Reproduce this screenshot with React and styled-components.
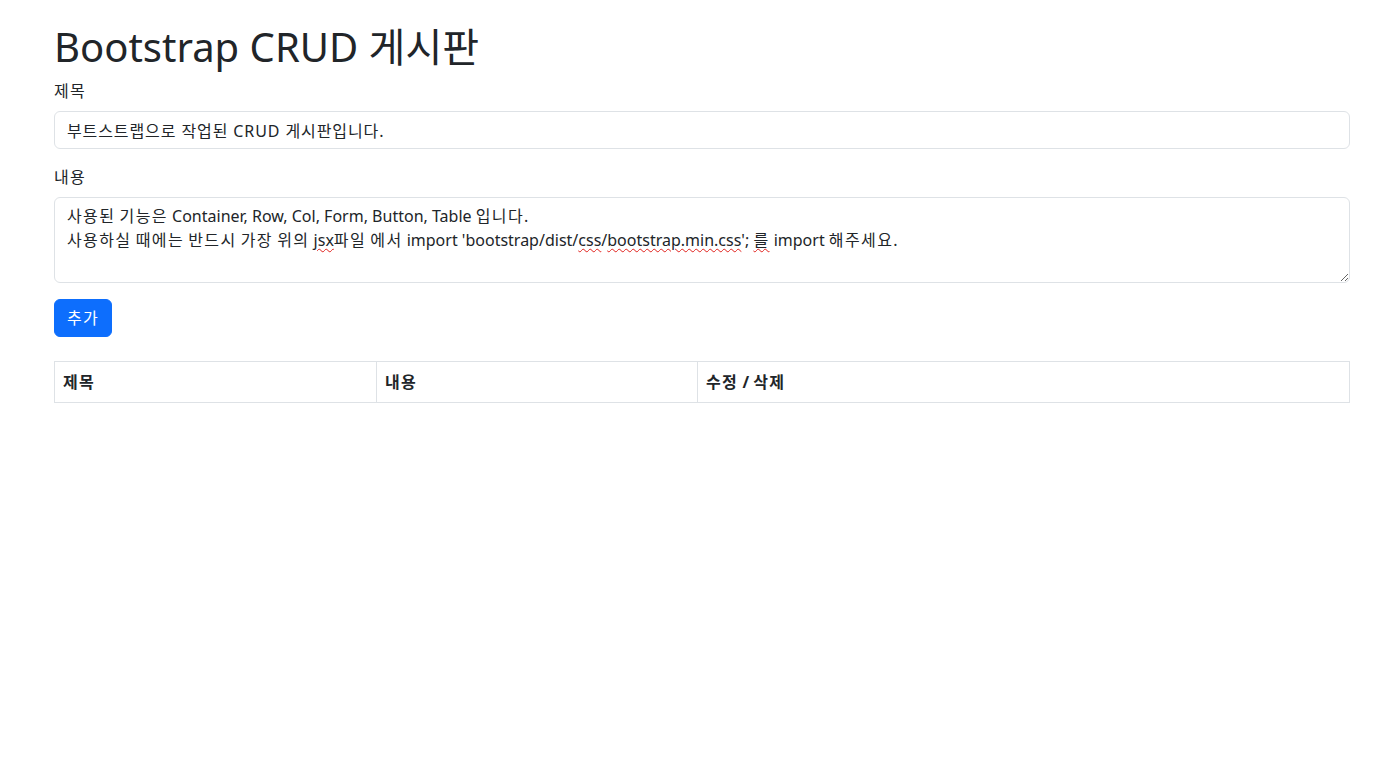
import React from 'react';
import styled, { createGlobalStyle } from 'styled-components';

const GlobalStyle = createGlobalStyle`
  html, body {
    margin: 0;
    padding: 0;
    background: #fff;
  }
  body {
    font-family: "Noto Sans", "Noto Sans CJK KR", sans-serif;
    font-size: 16px;
    line-height: 1.5;
    color: #212529;
  }
  * {
    box-sizing: border-box;
  }
`;

// hangul at 16px renders a bit wider in the original font
const HANGUL = /([\uAC00-\uD7A3]+)/;

const Wide = styled.span`
  letter-spacing: 1.4px;
`;

const Ko = ({ children }) =>
  String(children)
    .split(HANGUL)
    .map((part, i) => (HANGUL.test(part) ? <Wide key={i}>{part}</Wide> : part));

const Container = styled.div`
  padding: 23px 34px 0 54px;
`;

const Title = styled.h1`
  margin: 0 0 8px;
  font-size: 40px;
  font-weight: 400;
  line-height: 1.2;
`;

const Field = styled.div`
  margin-bottom: 16px;
`;

const Label = styled.label`
  display: block;
  margin-bottom: 8px;
`;

const Input = styled.input`
  display: block;
  width: 100%;
  height: 38px;
  padding: 6px 12px;
  font: inherit;
  letter-spacing: 0.9px;
  color: #212529;
  border: 1px solid #dee2e6;
  border-radius: 6px;
  outline: none;
`;

const TextArea = styled.div`
  width: 100%;
  height: 86px;
  padding: 6px 12px;
  border: 1px solid #dee2e6;
  border-radius: 6px;
  overflow: auto;
  resize: vertical;
  white-space: pre-wrap;
`;

const Misspelled = styled.span`
  text-decoration: underline wavy #e0201b;
  text-decoration-thickness: 1px;
  text-underline-offset: 2px;
`;

const Button = styled.button`
  display: inline-block;
  height: 38px;
  padding: 6px 12px;
  font: inherit;
  color: #fff;
  background: #0d6efd;
  border: 1px solid #0d6efd;
  border-radius: 6px;
  cursor: pointer;
`;

const Table = styled.table`
  width: 100%;
  margin-top: 24px;
  border-collapse: collapse;
  table-layout: fixed;
`;

const Th = styled.th`
  width: ${(p) => p.$w || 'auto'};
  padding: 8px;
  text-align: left;
  font-weight: 700;
  border: 1px solid #dee2e6;
`;

export default function App() {
  return (
    <>
      <GlobalStyle />
      <Container>
        <Title>Bootstrap CRUD 게시판</Title>
        <Field>
          <Label htmlFor="title"><Ko>제목</Ko></Label>
          <Input id="title" type="text" defaultValue="부트스트랩으로 작업된 CRUD 게시판입니다." />
        </Field>
        <Field>
          <Label><Ko>내용</Ko></Label>
          <TextArea role="textbox">
            <Ko>사용된 기능은 Container, Row, Col, Form, Button, Table 입니다.</Ko>{'\n'}
            <Ko>사용하실 때에는 반드시 가장 위의 </Ko><Misspelled>jsx</Misspelled>
            <Ko>파일 에서 import 'bootstrap/dist/</Ko><Misspelled>css</Misspelled>/
            <Misspelled>bootstrap.min.css</Misspelled>'; <Misspelled><Ko>를</Ko></Misspelled>
            <Ko> import 해주세요.</Ko>
          </TextArea>
        </Field>
        <Button type="button"><Ko>추가</Ko></Button>
        <Table>
          <thead>
            <tr>
              <Th $w="322px"><Ko>제목</Ko></Th>
              <Th $w="321px"><Ko>내용</Ko></Th>
              <Th><Ko>수정 / 삭제</Ko></Th>
            </tr>
          </thead>
        </Table>
      </Container>
    </>
  );
}
